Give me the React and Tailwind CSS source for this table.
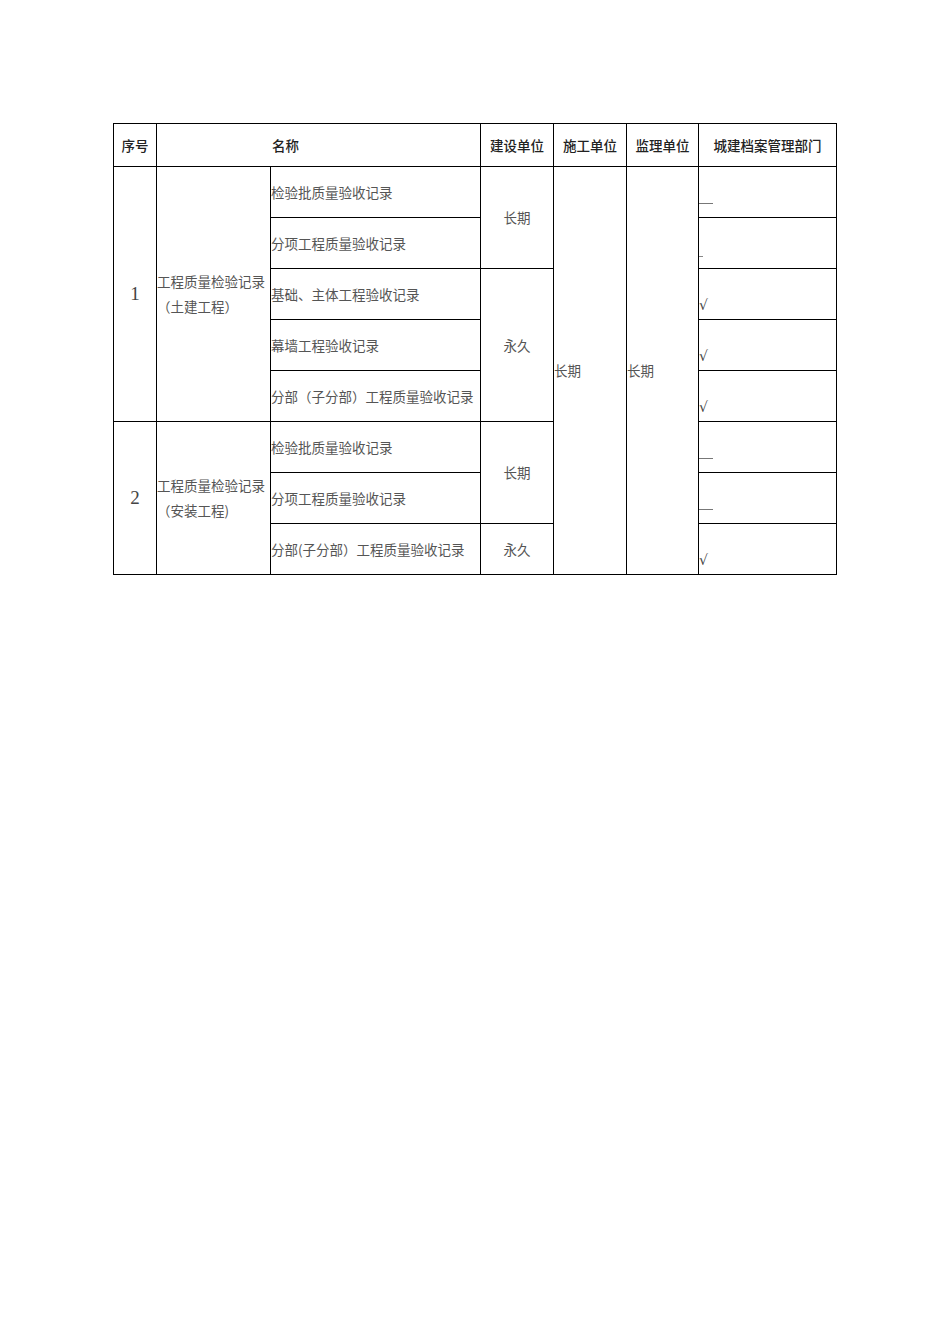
const FONT = { fontFamily: '"Noto Sans CJK SC", "Noto Sans", sans-serif' };

const marks = [
  { key: 1, mark: "—" },
  { key: 2, mark: "-" },
  { key: 3, mark: "√" },
  { key: 4, mark: "√" },
  { key: 5, mark: "√" },
  { key: 6, mark: "—" },
  { key: 7, mark: "—" },
  { key: 8, mark: "√" },
];

const Mark = ({ value }) => (
  <td className="border border-black align-bottom pb-[4px] pl-0 text-left leading-none text-[14px] text-[#444]">
    {value === "-" ? (
      <span className="inline-block w-[4px] h-px bg-[#888] mb-[6px]"></span>
    ) : value === "—" ? (
      <span className="inline-block w-[14px] h-px bg-[#777] mb-[8px]"></span>
    ) : (
      <span className="inline-block mb-[3px]" style={{ fontFamily: '"DejaVu Sans", sans-serif' }}>
        {value}
      </span>
    )}
  </td>
);

const Item = ({ children }) => (
  <td className="border border-black text-left align-middle p-0 whitespace-nowrap">{children}</td>
);

const App = () => {
  return (
    <div className="w-[950px] min-h-[1344px] bg-white pt-[123px]" style={FONT}>
      <table className="ml-[113px] w-[723px] table-fixed border-collapse text-[13.5px] text-[#555]">
        <colgroup>
          <col className="w-[43px]" />
          <col className="w-[114px]" />
          <col className="w-[210px]" />
          <col className="w-[73px]" />
          <col className="w-[73px]" />
          <col className="w-[72px]" />
          <col className="w-[138px]" />
        </colgroup>
        <thead>
          <tr className="h-[43px] text-[#222]">
            <th className="border border-black text-center font-medium">序号</th>
            <th className="border border-black text-center font-medium pr-[66px]" colSpan={2}>
              名称
            </th>
            <th className="border border-black text-center font-medium">建设单位</th>
            <th className="border border-black text-center font-medium">施工单位</th>
            <th className="border border-black text-center font-medium">监理单位</th>
            <th className="border border-black text-center font-medium">城建档案管理部门</th>
          </tr>
        </thead>
        <tbody>
          <tr className="h-[51px]">
            <td
              className="border border-black text-center align-middle text-[19px] text-[#444]"
              rowSpan={5}
              style={{ fontFamily: '"Liberation Serif", serif' }}
            >
              1
            </td>
            <td className="border border-black text-left align-middle p-0 leading-[25px]" rowSpan={5}>
              <div>工程质量检验记录</div>
              <div>（土建工程）</div>
            </td>
            <Item>检验批质量验收记录</Item>
            <td className="border border-black text-center align-middle" rowSpan={2}>
              长期
            </td>
            <td className="border border-black text-left align-middle p-0" rowSpan={8}>
              长期
            </td>
            <td className="border border-black text-left align-middle p-0" rowSpan={8}>
              长期
            </td>
            <Mark value={marks[0].mark} />
          </tr>
          <tr className="h-[51px]">
            <Item>分项工程质量验收记录</Item>
            <Mark value={marks[1].mark} />
          </tr>
          <tr className="h-[51px]">
            <Item>基础、主体工程验收记录</Item>
            <td className="border border-black text-center align-middle" rowSpan={3}>
              永久
            </td>
            <Mark value={marks[2].mark} />
          </tr>
          <tr className="h-[51px]">
            <Item>幕墙工程验收记录</Item>
            <Mark value={marks[3].mark} />
          </tr>
          <tr className="h-[51px]">
            <Item>分部（子分部）工程质量验收记录</Item>
            <Mark value={marks[4].mark} />
          </tr>
          <tr className="h-[51px]">
            <td
              className="border border-black text-center align-middle text-[19px] text-[#444]"
              rowSpan={3}
              style={{ fontFamily: '"Liberation Serif", serif' }}
            >
              2
            </td>
            <td className="border border-black text-left align-middle p-0 leading-[25px]" rowSpan={3}>
              <div>工程质量检验记录</div>
              <div>（安装工程)</div>
            </td>
            <Item>检验批质量验收记录</Item>
            <td className="border border-black text-center align-middle" rowSpan={2}>
              长期
            </td>
            <Mark value={marks[5].mark} />
          </tr>
          <tr className="h-[51px]">
            <Item>分项工程质量验收记录</Item>
            <Mark value={marks[6].mark} />
          </tr>
          <tr className="h-[51px]">
            <Item>分部(子分部）工程质量验收记录</Item>
            <td className="border border-black text-center align-middle">永久</td>
            <Mark value={marks[7].mark} />
          </tr>
        </tbody>
      </table>
    </div>
  );
};

export default App;
